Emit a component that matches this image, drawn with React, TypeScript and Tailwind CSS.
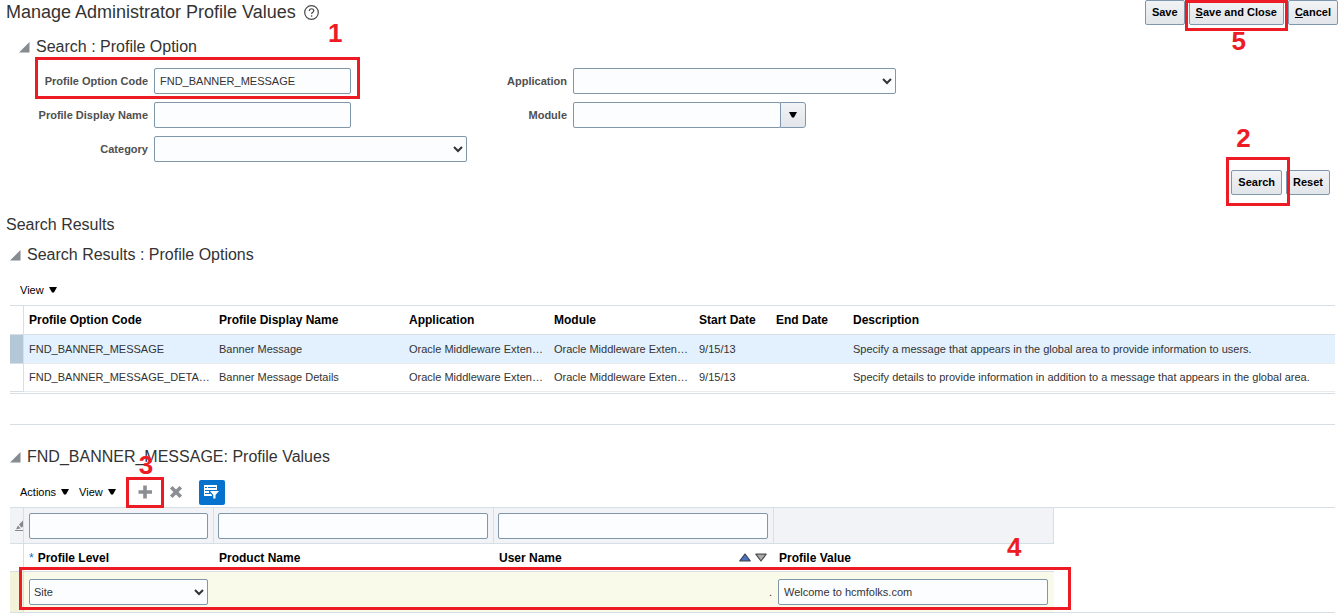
import type { ReactNode } from 'react';

const FIELD =
  'h-[26px] rounded-[2px] border border-[#7f97a8] bg-[#fcfdff] text-[11px] text-[#333333] outline-none';
const LINE = 'border-[#d6dfe6]';

const profileOptions = [
  {
    code: 'FND_BANNER_MESSAGE',
    name: 'Banner Message',
    start: '9/15/13',
    description: 'Specify a message that appears in the global area to provide information to users.',
    selected: true,
  },
  {
    code: 'FND_BANNER_MESSAGE_DETA…',
    name: 'Banner Message Details',
    start: '9/15/13',
    description:
      'Specify details to provide information in addition to a message that appears in the global area.',
    selected: false,
  },
];

const optionColumns = [
  'Profile Option Code',
  'Profile Display Name',
  'Application',
  'Module',
  'Start Date',
  'End Date',
  'Description',
];

const APP_NAME = 'Oracle Middleware Exten…';

/** Red frame drawn over the control that a step refers to. */
function Frame({ className }: { className: string }) {
  return <span className={`pointer-events-none absolute z-10 border-3 border-[#ed1c24] ${className}`} />;
}

function Step({ n, className }: { n: number; className: string }) {
  return (
    <span
      className={`pointer-events-none absolute z-10 text-[26px] leading-[26px] font-bold text-[#ed1c24] ${className}`}
    >
      {n}
    </span>
  );
}

function Button({ children }: { children: ReactNode }) {
  return (
    <button
      type="button"
      className="h-[25px] rounded-[2px] border border-[#7f97ad] bg-linear-to-b from-[#f1f3f5] to-[#e2e5e9] px-[6px] text-[11px] font-bold whitespace-nowrap text-black"
    >
      {children}
    </button>
  );
}

function Caret() {
  return (
    <svg width="8" height="6" viewBox="0 0 8 6" aria-hidden="true">
      <path d="M0 0h8L5 5.5H3z" fill="#000" />
    </svg>
  );
}

function Menu({ label }: { label: string }) {
  return (
    <button type="button" className="flex items-center gap-[5px] text-[11px] text-black">
      {label}
      <Caret />
    </button>
  );
}

function SectionTitle({ children }: { children: ReactNode }) {
  return (
    <h3 className="flex h-[22px] items-center gap-[6px] text-[16px] text-[#333333]">
      <svg width="11" height="11" viewBox="0 0 11 11" aria-hidden="true">
        <path d="M10.5 0v10.5H0z" fill="#868b90" />
      </svg>
      {children}
    </h3>
  );
}

function Field({ id, label, labelClass, children }: {
  id: string;
  label: string;
  labelClass: string;
  children: ReactNode;
}) {
  return (
    <div className="flex items-center gap-[6px]">
      <label htmlFor={id} className={`text-right text-[11px] font-bold text-[#4f4f4f] ${labelClass}`}>
        {label}
      </label>
      {children}
    </div>
  );
}

function SearchForm() {
  return (
    <form className="relative mt-[10px]" onSubmit={(e) => e.preventDefault()}>
      <div className="flex">
        <div className="flex w-[467px] flex-col gap-2">
          <Field id="code" label="Profile Option Code" labelClass="w-[148px]">
            <input id="code" defaultValue="FND_BANNER_MESSAGE" className={`${FIELD} w-[197px] px-[5px]`} />
          </Field>
          <Field id="display" label="Profile Display Name" labelClass="w-[148px]">
            <input id="display" className={`${FIELD} w-[197px] px-[5px]`} />
          </Field>
          <Field id="category" label="Category" labelClass="w-[148px]">
            <select id="category" className={`${FIELD} w-[313px]`} />
          </Field>
        </div>
        <div className="flex flex-col gap-2">
          <Field id="application" label="Application" labelClass="w-[100px]">
            <select id="application" className={`${FIELD} w-[323px]`} />
          </Field>
          <Field id="module" label="Module" labelClass="w-[100px]">
            <div className="flex">
              <input id="module" className={`${FIELD} w-[208px] px-[5px]`} />
              <button
                type="button"
                aria-label="Show modules"
                className="-ml-px flex h-[26px] w-[26px] items-center justify-center rounded-r-[3px] border border-[#7f97ad] bg-linear-to-b from-[#f1f3f5] to-[#e2e5e9]"
              >
                <Caret />
              </button>
            </div>
          </Field>
        </div>
      </div>
      <Frame className="-top-[11px] left-[35px] h-[42px] w-[325px]" />
      <Step n={1} className="-top-[48px] left-[328px]" />

      <div className="mt-2 flex justify-end gap-1 pr-[9px]">
        <div className="relative flex">
          <Button>Search</Button>
          <Frame className="-top-[13px] -right-[8px] -left-[5px] h-[49px]" />
          <Step n={2} className="-top-[45px] left-[5px]" />
        </div>
        <Button>Reset</Button>
      </div>
    </form>
  );
}

function OptionsTable() {
  const cell = 'truncate pl-[5px] pr-[2px] text-left';
  return (
    <table className={`mt-[5px] w-full table-fixed border-separate border-spacing-0 border-y ${LINE} pb-px`}>
      <colgroup>
        <col className="w-[14px]" />
        <col className="w-[190px]" />
        <col className="w-[190px]" />
        <col className="w-[145px]" />
        <col className="w-[145px]" />
        <col className="w-[77px]" />
        <col className="w-[77px]" />
        <col />
      </colgroup>
      <thead>
        <tr className="h-[29px] text-[12px] text-black">
          <td className={`border-r border-b ${LINE}`} />
          {optionColumns.map((c) => (
            <th key={c} scope="col" className={`${cell} border-b ${LINE} font-bold`}>
              {c}
            </th>
          ))}
        </tr>
      </thead>
      <tbody>
        {profileOptions.map((o) => (
          <tr
            key={o.code}
            className={`text-[11px] text-[#333333] ${o.selected ? 'h-[29px] bg-[#e3f1ff]' : 'h-[28px]'}`}
          >
            <td className={`border-r border-b ${LINE} ${o.selected ? 'bg-[#b4c7d7]' : ''}`} />
            {[o.code, o.name, APP_NAME, APP_NAME, o.start, '', o.description].map((v, i) => (
              <td key={i} className={`${cell} border-b border-[#e8ecef]`}>
                {v}
              </td>
            ))}
          </tr>
        ))}
      </tbody>
    </table>
  );
}

function ValuesToolbar() {
  return (
    <div className="mt-[11px] flex h-[26px] items-center pl-[10px]">
      <Menu label="Actions" />
      <div className="w-[10px]" />
      <Menu label="View" />
      <div className="relative ml-[10px] flex h-[31px] w-[38px] items-center justify-center">
        <button type="button" aria-label="Add">
          <svg width="14" height="14" viewBox="0 0 14 14" className="block">
            <path d="M5.2 .5h3.6v4.7H14v3.6H8.800v4.7H5.200V8.800H.5V5.200h4.700z" fill="#8b8f93" />
          </svg>
        </button>
        <Frame className="inset-0" />
        <Step n={3} className="-top-[25px] left-[13px]" />
      </div>
      <button type="button" aria-label="Delete" className="ml-[5px]">
        <svg width="14" height="14" viewBox="0 0 14 14" className="block">
          <path d="M2.200 2.200l9.600 9.600M11.800 2.200l-9.600 9.600" stroke="#8b8f93" strokeWidth="3.600" />
        </svg>
      </button>
      <button
        type="button"
        aria-label="Query by example"
        className="ml-4 flex h-[25px] w-[26px] items-center justify-center rounded-[2px] bg-[#0572ce]"
      >
        <svg width="15" height="14" viewBox="0 0 15 14">
          <path d="M0 0h13v5H6l2 3v3H0z" fill="#fff" />
          <path d="M1 2.500h2M4 2.500h8M1 5.500h4M1 8.500h5" stroke="#0572ce" />
          <path d="M5 5h10v2.500L12 10.500V14H8.500v-3.500L5 7.500z" fill="#0572ce" />
          <path d="M6 6h9l-3.500 4v3.500H9.300V10z" fill="#fff" />
        </svg>
      </button>
    </div>
  );
}

function SortIcons() {
  return (
    <span className="flex gap-1 pr-[2px]">
      <svg width="12" height="9" viewBox="0 0 12 9">
        <path d="M6 1l5.200 6.800H.8z" fill="#4a72c4" stroke="#3c4452" strokeWidth="1.200" strokeLinejoin="round" />
      </svg>
      <svg width="12" height="9" viewBox="0 0 12 9">
        <path d="M6 8L.8 1.200h10.400z" fill="#a9abad" stroke="#4c4c4c" strokeWidth="1.200" strokeLinejoin="round" />
      </svg>
    </span>
  );
}

function ValuesTable() {
  const filter = `border-r border-b ${LINE} bg-[#f1f3f7] px-1`;
  const head = `border-b ${LINE} pl-[5px] pr-[5px] text-left font-bold`;
  return (
    <div className="relative mt-[2px]">
      <table className={`w-full table-fixed border-separate border-spacing-0 border-y ${LINE}`}>
        <colgroup>
          <col className="w-[14px]" />
          <col className="w-[190px]" />
          <col className="w-[280px]" />
          <col className="w-[280px]" />
          <col className="w-[280px]" />
          <col />
        </colgroup>
        <thead>
          <tr className="h-[36px]">
            <td className={`border-r border-b ${LINE} overflow-hidden bg-[#f1f3f7] pl-[5px]`}>
              <svg width="8" height="12" viewBox="0 0 8 12" className="block">
                <path d="M8 .5L4 4.500l2.500 3.300L8 6.500z" fill="#85898d" />
                <path d="M3 5.500L5.600 8.600 1 9.300z" fill="#85898d" />
                <path d="M0 10.500h8" stroke="#85898d" />
              </svg>
            </td>
            <td className={filter}>
              <input aria-label="Filter Profile Level" className={`${FIELD} ml-px block w-[179px] px-[5px]`} />
            </td>
            <td className={filter}>
              <input aria-label="Filter Product Name" className={`${FIELD} block w-[270px] px-[5px]`} />
            </td>
            <td className={filter}>
              <input aria-label="Filter User Name" className={`${FIELD} block w-[270px] px-[5px]`} />
            </td>
            <td className={filter} />
            <td />
          </tr>
          <tr className="h-[28px] text-[12px] text-black">
            <td className={`border-r border-b ${LINE}`} />
            <th scope="col" className={head}>
              <span className="mr-1 font-normal text-[#0572ce]">*</span>
              Profile Level
            </th>
            <th scope="col" className={head}>Product Name</th>
            <th scope="col" className={head}>
              <div className="flex items-center justify-between">
                User Name
                <SortIcons />
              </div>
            </th>
            <th scope="col" className={head}>Profile Value</th>
            <td />
          </tr>
        </thead>
        <tbody>
          <tr className="h-[40px] text-[11px] text-[#333333]">
            <td className={`border-r ${LINE} bg-[#f3f3da]`} />
            <td className="bg-[#f9faea] pl-[5px]">
              <select aria-label="Profile Level" className={`${FIELD} block w-[179px]`}>
                <option>Site</option>
              </select>
            </td>
            <td className="bg-[#f9faea]" />
            <td className="bg-[#f9faea] pr-[2px] text-right">.</td>
            <td className="bg-[#f9faea] pl-1">
              <input
                aria-label="Profile Value"
                defaultValue="Welcome to hcmfolks.com"
                className={`${FIELD} block w-[270px] px-[5px]`}
              />
            </td>
            <td />
          </tr>
        </tbody>
      </table>
      <Frame className="top-[60px] left-[9px] h-[43px] w-[1052px]" />
      <Step n={4} className="top-[27px] left-[997px]" />
    </div>
  );
}

export default function App() {
  return (
    <main className="w-full overflow-hidden bg-white font-['Liberation_Sans',Arial,sans-serif] leading-normal">
      <header className="flex items-start justify-between pr-px pl-[6px]">
        <h1 className="flex h-[25px] items-center gap-2 text-[18px] text-[#333333]">
          Manage Administrator Profile Values
          <svg width="15" height="15" viewBox="0 0 15 15" fill="none" stroke="#4a4a4a" aria-label="Help">
            <circle cx="7.500" cy="7.500" r="6.800" strokeWidth="1.200" />
            <path d="M5.300 6c0-3 4.500-2.900 4.500-.3 0 1.600-2.200 1.500-2.200 3.400" strokeWidth="1.200" />
            <path d="M7.600 10.300v1.400" strokeWidth="1.300" />
          </svg>
        </h1>
        <div className="flex gap-1">
          <Button>Save</Button>
          <div className="relative flex">
            <Button>
              <u>S</u>ave and Close
            </Button>
            <Frame className="top-0 -right-[4px] -left-[4px] h-[31px]" />
            <Step n={5} className="top-[28px] left-[43px]" />
          </div>
          <Button>
            <u>C</u>ancel
          </Button>
        </div>
      </header>

      <section className="mt-[11px]">
        <div className="pl-[19px]">
          <SectionTitle>Search : Profile Option</SectionTitle>
        </div>
        <SearchForm />
      </section>

      <h2 className="mt-[19px] flex h-[22px] items-center pl-[6px] text-[16px] text-[#333333]">Search Results</h2>

      <section className="mt-2 pr-1 pl-[10px]">
        <SectionTitle>Search Results : Profile Options</SectionTitle>
        <div className="mt-[14px] flex h-5 items-center pl-[10px]">
          <Menu label="View" />
        </div>
        <OptionsTable />
      </section>

      <section className={`mt-[30px] mr-1 ml-[10px] border-t ${LINE} pt-[21px]`}>
        <SectionTitle>FND_BANNER_MESSAGE: Profile Values</SectionTitle>
        <ValuesToolbar />
        <ValuesTable />
      </section>
    </main>
  );
}
